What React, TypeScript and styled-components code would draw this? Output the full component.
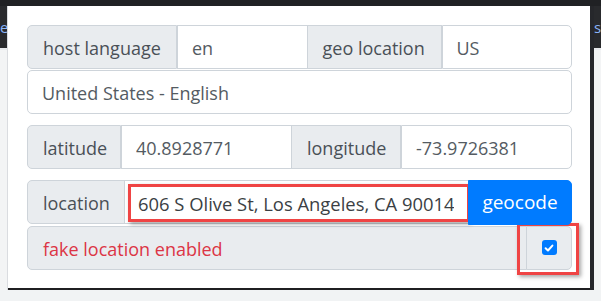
import styled, { createGlobalStyle } from "styled-components";

const GlobalStyle = createGlobalStyle`
    html, body {
        margin: 0;
        padding: 0;
        background: #f1f3f4;
    }
    body {
        font-family: "Open Sans", "Noto Sans", sans-serif;
    }
`

type AddonProps = {
    $w?: number;
    $danger?: boolean;
}

export default function App() {
    return (
        <Screen>
            <GlobalStyle/>
            <TopBar/>
            <Middle>
                <SideStrip $align="right">
                    <SideTab>ee</SideTab>
                </SideStrip>
                <PopupColumn>
                    <Popup>
                        <InputGroup $mb={1}>
                            <Addon $w={150}>host language</Addon>
                            <Field readOnly value="en"/>
                            <Addon $w={135}>geo location</Addon>
                            <Field readOnly value="US"/>
                        </InputGroup>
                        <InputGroup $mb={11}>
                            <Field readOnly value="United States - English"/>
                        </InputGroup>
                        <InputGroup $mb={11}>
                            <Addon $w={94}>latitude</Addon>
                            <Field readOnly value="40.8928771"/>
                            <Addon $w={110}>longitude</Addon>
                            <Field readOnly value="-73.9726381"/>
                        </InputGroup>
                        <InputGroup $mb={2}>
                            <Addon $w={98}>location</Addon>
                            <FieldWrap>
                                <Field readOnly $dark value="606 S Olive St, Los Angeles, CA 90014"/>
                                <LocationMark/>
                            </FieldWrap>
                            <GeocodeButton>geocode</GeocodeButton>
                        </InputGroup>
                        <InputGroup>
                            <Addon $danger>fake location enabled</Addon>
                            <CheckCell $w={46}>
                                <CheckBox>
                                    <svg width="10" height="10" viewBox="0 0 10 10">
                                        <path d="M1.6 5.2 L4 7.5 L8.4 2.6" fill="none" stroke="#fff" strokeWidth="2" strokeLinecap="round" strokeLinejoin="round"/>
                                    </svg>
                                </CheckBox>
                                <CheckMark/>
                            </CheckCell>
                        </InputGroup>
                    </Popup>
                    <PopupShadow/>
                </PopupColumn>
                <RightRule/>
                <SideStrip $align="left">
                    <SideTab>s</SideTab>
                </SideStrip>
            </Middle>
        </Screen>
    );
}

const Screen = styled.div`
    width: 601px;
    height: 301px;
    overflow: hidden;
    display: flex;
    flex-direction: column;
    background: #f1f3f4;
`
const TopBar = styled.div`
    height: 6px;
    background: #202124;
    flex-shrink: 0;
`
const Middle = styled.div`
    display: flex;
    height: 284px;
`
const SideStrip = styled.div<{ $align: string }>`
    flex: 1;
    display: flex;
    flex-direction: column;
    overflow: hidden;
    text-align: ${p => p.$align};
    background: #f3f4f5;
    border-right: ${p => p.$align === "right" ? "1px solid #dadce0" : "none"};
`
const SideTab = styled.div`
    height: 42px;
    background: #292a2d;
    color: #8ab4f8;
    font-size: 15px;
    line-height: 42px;
    white-space: nowrap;
    border-bottom: 2px solid #e8eaed;
`
const PopupColumn = styled.div`
    width: 582px;
    display: flex;
    flex-direction: column;
`
const Popup = styled.div`
    height: 282px;
    box-sizing: border-box;
    background: #fff;
    padding: 19px 18px 0 19px;
`
const PopupShadow = styled.div`
    height: 2px;
    background: #1f1f21;
`
const RightRule = styled.div`
    width: 4px;
    background: #26272b;
`
const InputGroup = styled.div<{ $mb?: number }>`
    display: flex;
    height: 44px;
    margin-bottom: ${p => p.$mb ?? 0}px;
    font-size: 18px;
    color: #495057;

    & > * + * {
        margin-left: -1px;
    }
    & > *:first-child {
        border-top-left-radius: 5px;
        border-bottom-left-radius: 5px;
    }
    & > *:last-child {
        border-top-right-radius: 5px;
        border-bottom-right-radius: 5px;
    }
`
const Addon = styled.div<AddonProps>`
    box-sizing: border-box;
    display: flex;
    align-items: center;
    padding: 2px 15px 0;
    ${p => p.$w ? `width: ${p.$w}px; flex-shrink: 0;` : "flex: 1;"}
    background: #e9ecef;
    border: 1px solid #ced4da;
    color: ${p => p.$danger ? "#dc3545" : "#495057"};
    white-space: nowrap;
`
const CheckCell = styled(Addon)`
    position: relative;
    justify-content: center;
    padding: 0;
`
const Field = styled.input<{ $dark?: boolean }>`
    flex: 1;
    min-width: 0;
    box-sizing: border-box;
    height: 44px;
    margin: 0;
    padding: 2px 14px 0;
    border: 1px solid #ced4da;
    background: #fff;
    font: inherit;
    color: ${p => p.$dark ? "#3b3f44" : "#545b62"};
    outline: none;
`
const FieldWrap = styled.div`
    flex: 1;
    display: flex;
    position: relative;

    ${Field} {
        padding-left: 13px;
        font-size: 18.4px;
    }
`
const LocationMark = styled.div`
    position: absolute;
    left: 4px;
    right: -1px;
    top: 4px;
    bottom: 2px;
    border: 3px solid #ef4444;
    box-shadow: 2px 2px 4px rgba(0, 0, 0, 0.35);
    pointer-events: none;
`
const GeocodeButton = styled.button`
    width: 104px;
    flex-shrink: 0;
    height: 45px;
    border: 1px solid #007bff;
    background: #007bff;
    color: #fff;
    font: inherit;
    font-size: 19px;
    padding: 0 0 2px;
    position: relative;
    z-index: 1;
`
const CheckBox = styled.span`
    width: 15px;
    height: 15px;
    border-radius: 3px;
    background: #007bff;
    display: flex;
    align-items: center;
    justify-content: center;
    margin-top: -1px;
`
const CheckMark = styled.div`
    position: absolute;
    left: -10px;
    right: -8px;
    top: -4px;
    bottom: -6px;
    border: 3px solid #ef4444;
    box-shadow: 2px 2px 4px rgba(0, 0, 0, 0.35);
    pointer-events: none;
`
